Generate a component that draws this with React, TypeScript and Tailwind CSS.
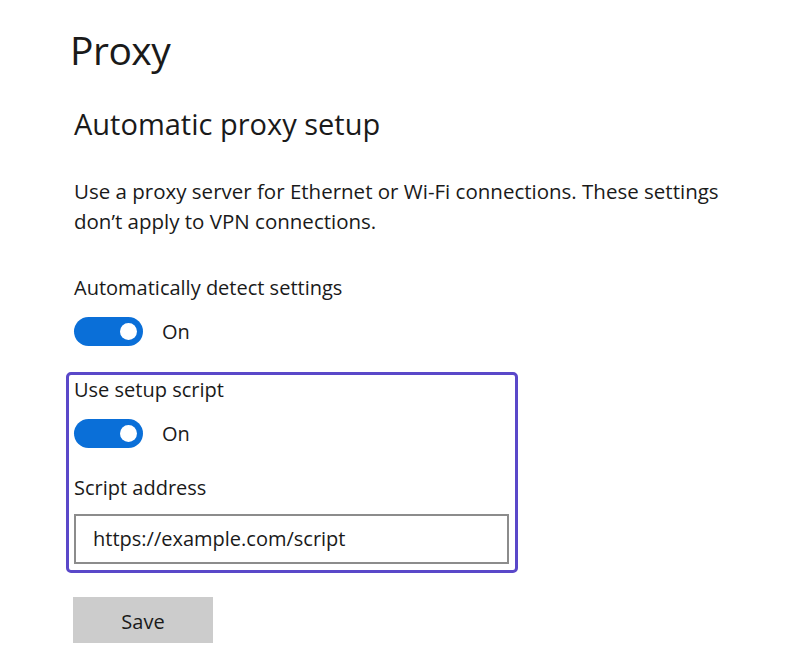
import React from "react";

function Toggle() {
  return (
    <div className="flex items-center gap-[19px]">
      <div className="w-[69px] h-[29px] rounded-full bg-[#0a6fd8] flex items-center justify-end pr-[6px]">
        <div className="w-[17px] h-[17px] rounded-full bg-white" />
      </div>
      <span className="text-[20px] text-[#1a1a1a] leading-none">On</span>
    </div>
  );
}

export default function App() {
  return (
    <div
      className="w-[800px] h-[670px] bg-white text-[#1a1a1a] overflow-hidden"
      style={{ fontFamily: '"Open Sans", "Noto Sans", sans-serif' }}
    >
      <div className="pl-[72px] pt-[24px]">
        <h1 className="ml-[-2px] text-[39px] leading-[52px] font-normal tracking-[-0.5px]">Proxy</h1>
        <h2 className="mt-[30px] ml-[2px] text-[29px] leading-[36px] font-normal">Automatic proxy setup</h2>
        <p className="mt-[34px] ml-[2px] w-[680px] text-[20.5px] leading-[30px]">
          Use a proxy server for Ethernet or Wi-Fi connections. These settings don’t apply to VPN connections.
        </p>
        <div className="mt-[37px] ml-[2px] text-[20px] leading-[30px]">Automatically detect settings</div>
        <div className="mt-[14px] ml-[2px]">
          <Toggle />
        </div>
        <div className="mt-[26px] ml-[-6px] w-[452px] border-[3px] border-[#5a48c9] rounded-[5px] pl-[5px] pr-[6px] pt-[1px] pb-[6px]">
          <div className="text-[20px] leading-[28px]">Use setup script</div>
          <div className="mt-[15px]">
            <Toggle />
          </div>
          <div className="mt-[26px] text-[20px] leading-[28px]">Script address</div>
          <div className="mt-[12px] h-[50px] border-2 border-[#8c8c8c] flex items-center pl-[17px] text-[20px]">
            https://example.com/script
          </div>
        </div>
        <button className="mt-[24px] ml-[1px] w-[140px] h-[46px] bg-[#cccccc] text-[20px] text-[#1a1a1a] flex items-center justify-center pt-[3px]">
          Save
        </button>
      </div>
    </div>
  );
}
